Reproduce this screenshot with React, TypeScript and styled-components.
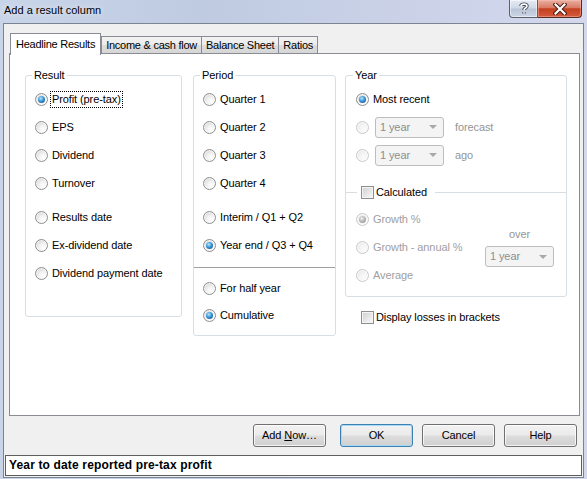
import React from "react";
import styled, { createGlobalStyle, css } from "styled-components";

const GlobalStyle = createGlobalStyle`
  html, body { margin: 0; padding: 0; }
  body {
    background: #c6d2e6;
    font-family: "Liberation Sans", Arial, sans-serif;
    font-size: 11px;
    letter-spacing: -0.1px;
    color: #000;
  }
  * { box-sizing: border-box; }
`;

const Window = styled.div`
  width: 587px;
  height: 479px;
  display: flex;
  flex-direction: column;
  overflow: hidden;
  background: linear-gradient(90deg, #c8d4e8 0%, #bfcbe1 35%, #cbd2e8 70%, #d3d8ec 100%);
`;

const TitleBar = styled.div`
  height: 23px;
  flex: none;
  display: flex;
  align-items: flex-start;
`;

const TitleText = styled.div`
  margin-left: 4px;
  padding-top: 1px;
  line-height: 19px;
  font-size: 11px;
  letter-spacing: 0;
  color: #000;
  text-shadow: 0 0 6px rgba(255, 255, 255, 0.9);
`;

const CaptionButtons = styled.div`
  margin-left: auto;
  margin-right: 5px;
  display: flex;
`;

const HelpButton = styled.div`
  width: 29px;
  height: 18px;
  border: 1px solid #59616f;
  border-top: none;
  border-radius: 0 0 0 4px;
  background: linear-gradient(#e6ecf5 0%, #cfd8e6 48%, #b9c4d6 52%, #cbd5e4 100%);
  box-shadow: inset 0 0 0 1px rgba(255, 255, 255, 0.5);
  display: flex;
  align-items: center;
  justify-content: center;
`;

const CloseButton = styled.div`
  width: 44px;
  height: 18px;
  border: 1px solid #5c2b20;
  border-top: none;
  border-left: none;
  border-radius: 0 0 4px 0;
  background: linear-gradient(#eab0a2 0%, #d97c65 45%, #c43f1e 52%, #d35b3d 100%);
  box-shadow: inset 0 0 0 1px rgba(255, 200, 190, 0.4);
  display: flex;
  align-items: center;
  justify-content: center;
`;

const Client = styled.div`
  flex: 1;
  margin: 0 3px 1px 3px;
  border: 1px solid #7a8493;
  background: #f0f0f0;
  display: flex;
  flex-direction: column;
  padding: 9px 3px 0 5px;
  min-height: 0;
`;

const TabStrip = styled.div`
  height: 20px;
  flex: none;
  display: flex;
  align-items: flex-end;
  padding-left: 1px;
  position: relative;
  z-index: 1;
`;

const Tab = styled.div<{ $active?: boolean }>`
  border: 1px solid #898c95;
  border-bottom: none;
  white-space: nowrap;
  line-height: 13px;
  letter-spacing: -0.25px;
  ${(p) =>
    p.$active
      ? css`
          height: 22px;
          margin-bottom: -2px;
          padding: 4px 5px 0 5px;
          background: #fff;
          position: relative;
          z-index: 2;
        `
      : css`
          height: 17px;
          margin-left: -1px;
          padding: 2px 4px 0 4px;
          background: linear-gradient(#f3f3f3 0%, #ebebeb 50%, #dddddd 51%, #d6d6d6 100%);
          &:nth-child(2) {
            margin-left: 0;
          }
        `}
`;

const Pane = styled.div`
  flex: 1;
  min-height: 0;
  border: 1px solid #898c95;
  background: #fff;
  display: flex;
  align-items: flex-start;
  padding: 15px 0 0 15px;
`;

const GroupBox = styled.fieldset<{ $w: number; $h: number; $pad?: number }>`
  margin: 0;
  min-width: 0;
  width: ${(p) => p.$w}px;
  height: ${(p) => p.$h}px;
  border: 1px solid #d5dfe5;
  border-radius: 3px;
  padding: 3px ${(p) => p.$pad ?? 9}px 0 ${(p) => p.$pad ?? 9}px;
  display: block;
`;

const Legend = styled.legend`
  padding: 0 2px;
  margin-left: -3px;
  line-height: 13px;
  font-size: 11px;
  color: #000;
`;

const ResultBox = styled(GroupBox)`
  margin-right: 11px;
`;

const PeriodBox = styled(GroupBox)`
  margin-right: 9px;
`;

const RightColumn = styled.div`
  display: flex;
  flex-direction: column;
`;

const Row = styled.div<{ $h?: number; $mt?: number }>`
  height: ${(p) => p.$h ?? 28}px;
  margin-top: ${(p) => p.$mt ?? 0}px;
  display: flex;
  align-items: center;
  gap: 4px;
  white-space: nowrap;
`;

const Circle = styled.span<{ $checked?: boolean; $disabled?: boolean }>`
  width: 13px;
  height: 13px;
  flex: none;
  border-radius: 50%;
  display: flex;
  align-items: center;
  justify-content: center;
  border: 1px solid ${(p) => (p.$disabled ? "#c9c9c9" : "#8e8f8f")};
  background: ${(p) =>
    p.$disabled
      ? "radial-gradient(circle at 65% 70%, #fbfbfb 0%, #f2f2f2 50%, #e2e2e2 100%)"
      : "radial-gradient(circle at 65% 70%, #ffffff 0%, #f1f1f1 40%, #c8c8c8 100%)"};
  box-shadow: inset 0 0 0 1px rgba(255, 255, 255, 0.7);
  &::after {
    content: "";
    display: ${(p) => (p.$checked ? "block" : "none")};
    width: 7px;
    height: 7px;
    border-radius: 50%;
    background: ${(p) =>
      p.$disabled
        ? "radial-gradient(circle at 40% 35%, #f2f2f2 0%, #b4b4b4 50%, #8a8a8a 100%)"
        : "radial-gradient(circle at 40% 35%, #b8e6ff 0%, #3a96d8 45%, #0b3f78 100%)"};
  }
`;

const Label = styled.span<{ $disabled?: boolean; $focus?: boolean }>`
  line-height: 13px;
  color: ${(p) => (p.$disabled ? "#a0a0a0" : "#000")};
  ${(p) =>
    p.$focus &&
    css`
      outline: 1px dotted #000;
      outline-offset: 0;
      padding: 1px 1px;
      margin-left: -1px;
    `}
`;

const HintText = styled.span<{ $ml?: number }>`
  color: #959595;
  line-height: 13px;
  margin-left: ${(p) => p.$ml ?? 0}px;
`;

const Separator = styled.div`
  height: 1px;
  background: #a0a0a0;
  margin: 8px -9px 7px -9px;
`;

const Combo = styled.div<{ $ml?: number }>`
  width: 69px;
  height: 21px;
  flex: none;
  margin-left: ${(p) => p.$ml ?? 0}px;
  border: 1px solid #bdbdbd;
  border-radius: 3px;
  background: #f4f4f4;
  display: flex;
  align-items: center;
  padding-left: 4px;
  color: #8d8d8d;
  line-height: 13px;
`;

const Arrow = styled.span`
  margin-left: auto;
  margin-right: 6px;
  width: 0;
  height: 0;
  border-left: 4px solid transparent;
  border-right: 4px solid transparent;
  border-top: 4px solid #a8a8a8;
`;

const Box = styled.span`
  width: 13px;
  height: 13px;
  flex: none;
  border: 1px solid #8e8f8f;
  background: linear-gradient(135deg, #cfcfcf 0%, #e9e9e9 60%, #f8f8f8 100%);
  box-shadow: inset 0 0 0 1px #f4f4f4;
`;

const CheckLabel = styled.span`
  display: flex;
  align-items: center;
  gap: 2px;
  line-height: 13px;
`;

const CalcRow = styled.div`
  height: 16px;
  margin: 15px -10px 0 -10px;
  display: flex;
  align-items: center;
  gap: 4px;
`;

const Line = styled.span<{ $w?: number }>`
  height: 1px;
  background: #d5dfe5;
  ${(p) => (p.$w ? `width: ${p.$w}px; flex: none;` : "flex: 1;")}
`;

const RightLine = styled(Line)`
  margin-left: 4px;
`;

const GrowthBlock = styled.div`
  margin-top: 5px;
  display: flex;
`;

const OverColumn = styled.div`
  margin-left: auto;
  margin-right: 2px;
  padding-top: 23px;
  display: flex;
  flex-direction: column;
  align-items: center;
  gap: 5px;
`;

const LossesRow = styled.div`
  height: 16px;
  margin-top: 12px;
  padding-left: 16px;
  display: flex;
  align-items: center;
`;

const ButtonRow = styled.div`
  flex: none;
  display: flex;
  justify-content: flex-end;
  gap: 9px;
  margin: 8px 3px 0 0;
`;

const Button = styled.div<{ $default?: boolean; $mr?: number }>`
  width: 73px;
  height: 23px;
  margin-right: ${(p) => p.$mr ?? 0}px;
  border-radius: 3px;
  border: 1px solid ${(p) => (p.$default ? "#3c7fb1" : "#707070")};
  background: linear-gradient(#f2f2f2 0%, #ebebeb 48%, #dddddd 52%, #cfcfcf 100%);
  box-shadow: inset 0 0 0 1px ${(p) => (p.$default ? "#a6dbf6" : "rgba(255,255,255,0.75)")};
  display: flex;
  align-items: center;
  justify-content: center;
  line-height: 13px;
  u {
    text-decoration: underline;
  }
`;

const StatusBar = styled.div`
  flex: none;
  height: 21px;
  margin: 8px -2px 1px -4px;
  border: 1px solid #5e5e5e;
  background: #fff;
  padding-left: 3px;
  font-weight: bold;
  font-size: 12px;
  letter-spacing: 0.15px;
  line-height: 19px;
  white-space: nowrap;
`;

const Radio: React.FC<{
  label: string;
  checked?: boolean;
  disabled?: boolean;
  focus?: boolean;
  h?: number;
  mt?: number;
}> = ({ label, checked, disabled, focus, h, mt }) => (
  <Row $h={h} $mt={mt}>
    <Circle $checked={checked} $disabled={disabled} />
    <Label $disabled={disabled} $focus={focus}>
      {label}
    </Label>
  </Row>
);

const CloseIcon = () => (
  <svg width="14" height="12" viewBox="0 0 14 12">
    <path d="M2.5 1.5 L11.5 10.5 M11.5 1.5 L2.5 10.5" stroke="#4a1a10" strokeWidth="4.2" strokeLinecap="square" />
    <path d="M2.5 1.5 L11.5 10.5 M11.5 1.5 L2.5 10.5" stroke="#ffffff" strokeWidth="2.2" strokeLinecap="square" />
  </svg>
);

const HelpIcon = () => (
  <svg width="10" height="13" viewBox="0 0 10 13">
    <path
      d="M2 4 C2 1.5 8 1.5 8 4 C8 6 5 6 5 8 M5 10.2 L5 11.6"
      fill="none"
      stroke="#3c4352"
      strokeWidth="3.4"
      strokeLinecap="butt"
    />
    <path
      d="M2 4 C2 1.5 8 1.5 8 4 C8 6 5 6 5 8 M5 10.2 L5 11.6"
      fill="none"
      stroke="#ffffff"
      strokeWidth="1.6"
      strokeLinecap="butt"
    />
  </svg>
);

export default function App() {
  return (
    <>
      <GlobalStyle />
      <Window>
        <TitleBar>
          <TitleText>Add a result column</TitleText>
          <CaptionButtons>
            <HelpButton>
              <HelpIcon />
            </HelpButton>
            <CloseButton>
              <CloseIcon />
            </CloseButton>
          </CaptionButtons>
        </TitleBar>
        <Client>
          <TabStrip>
            <Tab $active>Headline Results</Tab>
            <Tab>Income &amp; cash flow</Tab>
            <Tab>Balance Sheet</Tab>
            <Tab>Ratios</Tab>
          </TabStrip>
          <Pane>
            <ResultBox $w={157} $h={248}>
              <Legend>Result</Legend>
              <Radio label="Profit (pre-tax)" checked focus />
              <Radio label="EPS" />
              <Radio label="Dividend" />
              <Radio label="Turnover" />
              <Radio label="Results date" mt={6} />
              <Radio label="Ex-dividend date" />
              <Radio label="Dividend payment date" />
            </ResultBox>
            <PeriodBox $w={143} $h={267}>
              <Legend>Period</Legend>
              <Radio label="Quarter 1" />
              <Radio label="Quarter 2" />
              <Radio label="Quarter 3" />
              <Radio label="Quarter 4" />
              <Radio label="Interim / Q1 + Q2" mt={6} />
              <Radio label="Year end / Q3 + Q4" checked />
              <Separator />
              <Radio label="For half year" h={27} />
              <Radio label="Cumulative" checked h={27} />
            </PeriodBox>
            <RightColumn>
              <GroupBox $w={222} $h={228} $pad={10}>
                <Legend>Year</Legend>
                <Radio label="Most recent" checked />
                <Row>
                  <Circle $disabled />
                  <Combo $ml={2}>
                    1 year
                    <Arrow />
                  </Combo>
                  <HintText $ml={7}>forecast</HintText>
                </Row>
                <Row>
                  <Circle $disabled />
                  <Combo $ml={2}>
                    1 year
                    <Arrow />
                  </Combo>
                  <HintText $ml={7}>ago</HintText>
                </Row>
                <CalcRow>
                  <Line $w={11} />
                  <CheckLabel>
                    <Box />
                    Calculated
                  </CheckLabel>
                  <RightLine />
                </CalcRow>
                <GrowthBlock>
                  <div>
                    <Radio label="Growth %" checked disabled />
                    <Radio label="Growth - annual %" disabled />
                    <Radio label="Average" disabled />
                  </div>
                  <OverColumn>
                    <HintText>over</HintText>
                    <Combo>
                      1 year
                      <Arrow />
                    </Combo>
                  </OverColumn>
                </GrowthBlock>
              </GroupBox>
              <LossesRow>
                <CheckLabel>
                  <Box />
                  Display losses in brackets
                </CheckLabel>
              </LossesRow>
            </RightColumn>
          </Pane>
          <ButtonRow>
            <Button $mr={5}>
              Add&nbsp;<u>N</u>ow…
            </Button>
            <Button $default>OK</Button>
            <Button>Cancel</Button>
            <Button>Help</Button>
          </ButtonRow>
          <StatusBar>Year to date reported pre-tax profit</StatusBar>
        </Client>
      </Window>
    </>
  );
}
